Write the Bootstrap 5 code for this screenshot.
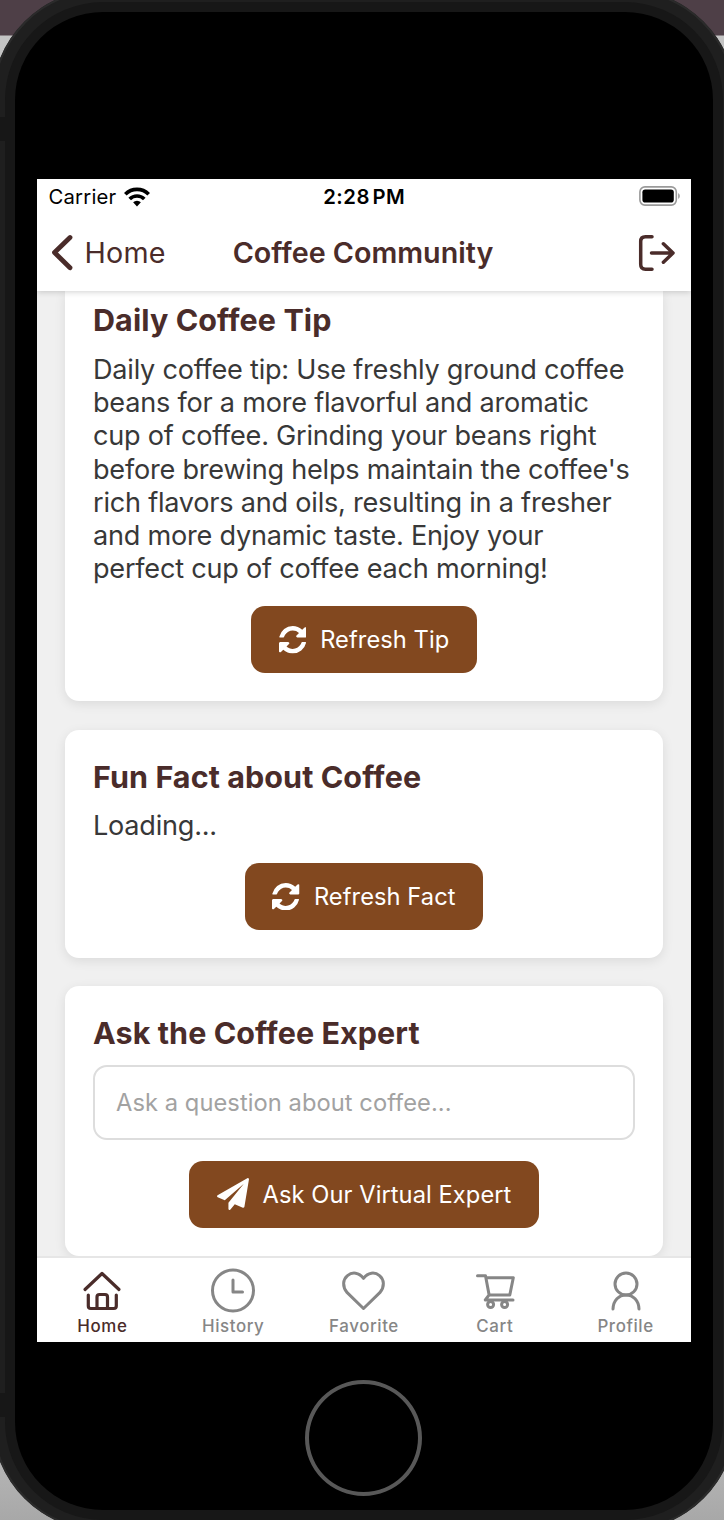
<!DOCTYPE html>
<html lang="en">
<head>
<meta charset="utf-8">
<meta name="viewport" content="width=device-width, initial-scale=1">
<title>Coffee Community</title>
<link href="https://cdn.jsdelivr.net/npm/bootstrap@5.3.0/dist/css/bootstrap.min.css" rel="stylesheet">
<style>
:root{--brew:#4a2c2a;--roast:#82481f;--ink:#383838}
body{width:724px;height:1520px;overflow:hidden;font-family:Inter,"Liberation Sans",sans-serif;background:linear-gradient(#4e3f47 0,#4e3f47 35px,#c4c4c4 36px,#b5b5b5 1460px,#a8a8a8 1520px)}
.bezel{width:744px;height:1542px;margin:-11px 0 0 -8px;padding:13px;border-radius:111px;background:#1f1f1f;box-shadow:inset 0 0 0 2px #2b2b2b}
.side-key{left:0;width:5px;height:24px;background:#171717}
.key-top{top:117px}
.key-bottom{top:1393px}
.rim{height:1518px;width:718px;border-radius:98px;padding:10px;background:#171717}
.glass{height:1498px;border-radius:88px;background:#000;padding:167px 22px 0}
.screen{width:654px;height:1163px;background:#f0f0f0}
.status{height:36px;padding:0 11px 0 11.5px;font-size:20.3px;letter-spacing:.2px;color:#000;z-index:3}
.clock{letter-spacing:.5px;word-spacing:-3px}
.topbar{height:76px;box-shadow:0 1px 6px rgba(0,0,0,.18);z-index:2;color:var(--brew);font-size:28.7px;padding:0 16px 0 14px}
.back{letter-spacing:.2px;color:inherit;text-decoration:none;gap:11.500px}
.thirds>*{flex:1 1 0}
.thirds>.mid{flex:0 0 auto}
.feed{height:964.5px;padding:0 28px;gap:28.2px}
.tile{background:#fff;border-radius:14px;padding:28px;box-shadow:0 3px 12px rgba(0,0,0,.09)}
.tile.cut{border-radius:0 0 14px 14px;padding-top:10.3px}
.tile h2{font-size:30.5px;line-height:37.4px;margin:0 0 14px;font-weight:700;letter-spacing:.08px;color:var(--brew)}
.tile p{font-size:27.1px;line-height:33.3px;letter-spacing:-.23px;margin:0 0 20.6px;color:var(--ink);white-space:nowrap}
.btn-roast,.btn-roast:hover{height:67px;border-radius:14px;border:0;background:var(--roast);color:#fff;font-size:23.7px;letter-spacing:.06px;padding:0 27.5px;gap:14px}
.ask,.ask:focus{height:74.5px;border:2px solid #ddd;border-radius:14px;font-size:23.7px;letter-spacing:.06px;padding:0 21px;margin-bottom:21px}
.ask::placeholder{color:#a2a2a2}
.tabs{height:86.5px;border-top:2px solid #e6e6e6;font-size:16.9px;line-height:20px;font-weight:500;letter-spacing:.6px;color:#868686;z-index:2}
.tabs a{color:inherit;text-decoration:none;flex:1 1 0;padding-top:9px;gap:3.5px}
.tabs a.on{color:var(--brew)}
.tabs svg{width:48px;height:46px}
.homebtn{width:117px;height:116px;border:4px solid #585858;margin:38px 0 0 268px}
svg{display:block;flex:none}
.line{fill:none;stroke:currentColor;stroke-linecap:round;stroke-linejoin:round}
</style>
</head>
<body>
<svg class="d-none">
  <symbol id="refresh" viewBox="0 0 1536 1536"><path fill="currentColor" d="M1511 928q0 5-1 7-64 268-268 434.500T764 1536q-146 0-282.500-55T238 1324l-129 129q-19 19-45 19t-45-19-19-45V960q0-26 19-45t45-19h448q26 0 45 19t19 45-19 45l-137 137q71 66 161 102t187 36q134 0 250-65t186-179q11-17 53-117 8-23 30-23h192q13 0 22.500 9.500t9.500 22.500zm25-800v448q0 26-19 45t-45 19h-448q-26 0-45-19t-19-45 19-45l138-138Q969 256 768 256q-134 0-250 65T332 500q-11 17-53 117-8 23-30 23H50q-13 0-22.500-9.500T18 608v-7q65-268 270-434.500T768 0q146 0 284 55.500T1297 212l130-129q19-19 45-19t45 19 19 45z"/></symbol>
</svg>
<div class="bezel">
  <div class="side-key key-top position-absolute"></div>
  <div class="side-key key-bottom position-absolute"></div>
  <div class="rim"><div class="glass">
    <main class="screen d-flex flex-column overflow-hidden">
      <div class="status thirds bg-white d-flex align-items-center flex-shrink-0 position-relative">
        <div class="d-flex align-items-center gap-2">Carrier
          <svg width="26" height="20" viewBox="0 0 26 20" fill="none" stroke="#000" stroke-width="3.700"><path d="M1.300 7.200a16.700 16.700 0 0 1 23.400 0"/><path d="M5.700 12a10.400 10.400 0 0 1 14.600 0"/><path stroke="none" fill="#000" d="M13 19.500l-3.900-4.200a5.700 5.700 0 0 1 7.800 0z"/></svg>
        </div>
        <div class="mid clock fw-semibold">2:28 PM</div>
        <div class="d-flex justify-content-end">
          <svg width="41" height="22" viewBox="0 0 41 22"><rect x=".9" y=".9" width="36.400" height="18.200" rx="5" fill="none" stroke="#9a9a9a" stroke-width="1.600"/><rect x="3.400" y="3.400" width="31.400" height="13.200" rx="2.800"/><path d="M39.200 7q1.600 1 1.600 3t-1.600 3z" fill="#9a9a9a"/></svg>
        </div>
      </div>
      <header class="topbar thirds bg-white d-flex align-items-center flex-shrink-0 position-relative">
        <a href="#" class="back d-flex align-items-center">
          <svg class="line" width="22" height="38" viewBox="0 0 22 38" stroke-width="4.800"><path d="M19 3.500L3.500 18.500l15.500 15.200"/></svg>Home</a>
        <div class="mid fw-semibold">Coffee Community</div>
        <div class="d-flex justify-content-end">
          <svg class="line" width="37" height="36" viewBox="0 0 37 36" stroke-width="3.500"><path d="M14 1.800H7.500Q2.700 1.800 2.700 6.500v23q0 4.700 4.800 4.700H14M13.500 18h21M25.400 8.800L35 18l-9.600 9.200"/></svg>
        </div>
      </header>
      <section class="feed d-flex flex-column flex-shrink-0">
        <article class="tile cut">
          <h2>Daily Coffee Tip</h2>
          <p>Daily coffee tip: Use freshly ground coffee<br>beans for a more flavorful and aromatic<br>cup of coffee. Grinding your beans right<br>before brewing helps maintain the coffee's<br>rich flavors and oils, resulting in a fresher<br>and more dynamic taste. Enjoy your<br>perfect cup of coffee each morning!</p>
          <button class="btn btn-roast d-flex align-items-center mx-auto"><svg width="27.500" height="27.500"><use href="#refresh"/></svg>Refresh Tip</button>
        </article>
        <article class="tile">
          <h2>Fun Fact about Coffee</h2>
          <p>Loading...</p>
          <button class="btn btn-roast d-flex align-items-center mx-auto"><svg width="27.500" height="27.500"><use href="#refresh"/></svg>Refresh Fact</button>
        </article>
        <article class="tile">
          <h2>Ask the Coffee Expert</h2>
          <input class="form-control ask" placeholder="Ask a question about coffee...">
          <button class="btn btn-roast d-flex align-items-center mx-auto"><svg width="32" height="32" viewBox="0 0 1792 1792"><path fill="currentColor" d="M1764 11q33 24 27 64l-256 1536q-5 29-32 45-14 8-31 8-11 0-24-5l-453-185-242 295q-18 23-49 23-13 0-22-4-19-7-30.500-23.500T640 1728v-349l864-1059-1069 925-395-162q-37-14-40-55-2-40 32-59L1696 9q15-9 32-9 20 0 36 11z"/></svg>Ask Our Virtual Expert</button>
        </article>
      </section>
      <nav class="tabs bg-white d-flex flex-shrink-0 position-relative">
        <a href="#" class="on d-flex flex-column align-items-center"><svg class="line" viewBox="0 0 48 46" stroke-width="3.200"><path d="M7 22.500L24 6.500l17 16M10.300 28v11q0 2.500 2.500 2.500h23q2.500 0 2.500-2.500V28M19 41V30q0-2.500 2.500-2.500h5.500q2.500 0 2.500 2.500v11"/></svg>Home</a>
        <a href="#" class="d-flex flex-column align-items-center"><svg class="line" viewBox="0 0 48 46" stroke-width="3"><circle cx="24" cy="23.500" r="20.500"/><path d="M24 13v12h9.500"/></svg>History</a>
        <a href="#" class="d-flex flex-column align-items-center"><svg class="line" viewBox="0 0 48 46" stroke-width="3"><path d="M23.500 41.500L7.200 25.700C2 19.500 2.800 12.500 7.500 8.600c4.800-4 11.500-3.200 16 2.700 4.500-5.900 11.200-6.700 16-2.700 4.700 3.900 5.500 10.900.3 17.100z"/></svg>Favorite</a>
        <a href="#" class="d-flex flex-column align-items-center"><svg class="line" viewBox="0 0 48 46" stroke-width="3"><path d="M6.500 8.700h8l3.600 19.200h20.700l3.500-17.200H15M18.100 27.900L14.300 33H42"/><circle cx="19.600" cy="37.500" r="3"/><circle cx="33.600" cy="37.500" r="3"/></svg>Cart</a>
        <a href="#" class="d-flex flex-column align-items-center"><svg class="line" viewBox="0 0 48 46" stroke-width="3"><circle cx="24" cy="17" r="11"/><path d="M11 42c.3-8.500 5.800-14 13-14s12.700 5.500 13 14"/></svg>Profile</a>
      </nav>
    </main>
    <div class="homebtn rounded-circle"></div>
  </div></div>
</div>
<script src="https://cdn.jsdelivr.net/npm/bootstrap@5.3.0/dist/js/bootstrap.bundle.min.js"></script>
</body>
</html>
